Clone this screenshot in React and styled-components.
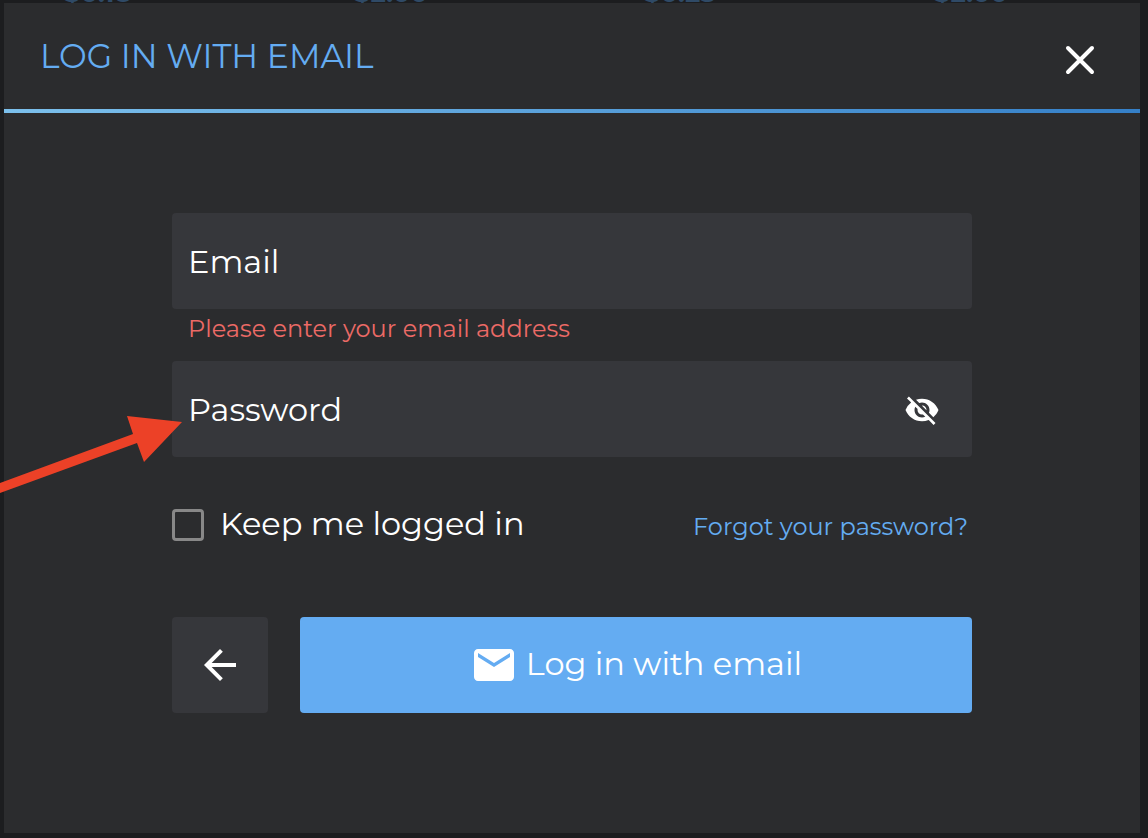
import React, { useState } from "react";
import styled, { createGlobalStyle } from "styled-components";
import { MdArrowBack, MdEmail, MdVisibility, MdVisibilityOff } from "react-icons/md";

const GlobalStyle = createGlobalStyle`
  *, *::before, *::after { box-sizing: border-box; }
  body {
    margin: 0;
    background: #1c1d1f;
    color: #fff;
    font-family: Montserrat, Inter, "Liberation Sans", sans-serif;
  }
  button, input { font: inherit; color: inherit; }
`;

const Backdrop = styled.div`
  position: relative;
  display: flex;
  min-height: 100vh;
  padding: 3px 8px 5px 4px;
  overflow: hidden;
`;

const PriceStrip = styled.div`
  position: absolute;
  top: -27px;
  left: 64px;
  display: grid;
  grid-template-columns: repeat(4, 290px);
  color: #2f4a66;
  font-size: 26px;
  font-weight: 700;
  line-height: 40px;
`;

const Dialog = styled.section`
  position: relative;
  flex: 1;
  min-width: 0;
  background: #2b2c2e;
`;

const Header = styled.header`
  display: flex;
  align-items: center;
  justify-content: space-between;
  height: 106px;
  padding: 0 36px;
`;

const Title = styled.h1`
  margin: 0;
  color: #64acf2;
  font-size: 33px;
  font-weight: 400;
  line-height: 40px;
`;

const CloseButton = styled.button`
  display: flex;
  padding: 8px;
  border: 0;
  background: none;
  cursor: pointer;
`;

const Accent = styled.div`
  height: 4px;
  background: linear-gradient(90deg, #7cc0ec, #3580c8);
`;

const Form = styled.form`
  width: 100%;
  max-width: 800px;
  margin: 0 auto;
  padding: 100px 0 120px;
`;

const Field = styled.div`
  display: flex;
  align-items: center;
  height: 96px;
  padding-right: 32px;
  border-radius: 4px;
  background: #36373b;
`;

const TextInput = styled.input`
  flex: 1;
  min-width: 0;
  height: 96px;
  padding: 0 16px;
  border: 0;
  outline: 0;
  background: none;
  font-size: 32px;
  &::placeholder { color: #fff; opacity: 1; }
`;

const IconButton = styled.button`
  display: flex;
  padding: 2px 0 0;
  border: 0;
  background: none;
  font-size: 36px;
  cursor: pointer;
`;

const ErrorText = styled.p`
  height: 52px;
  margin: 0;
  padding: 0 16px;
  color: #ec6a66;
  font-size: 24px;
  line-height: 40px;
`;

const Options = styled.div`
  display: flex;
  align-items: center;
  justify-content: space-between;
  height: 32px;
  margin: 52px 0 76px;
  padding-right: 4px;
`;

const CheckLabel = styled.label`
  display: flex;
  align-items: center;
  gap: 16px;
  font-size: 32px;
  line-height: 32px;
  span { padding-bottom: 2px; }
`;

const Checkbox = styled.input`
  width: 32px;
  height: 32px;
  margin: 0;
  appearance: none;
  border: 3px solid #888;
  border-radius: 4px;
  &:checked { background: #64acf2; }
`;

const ForgotLink = styled.a`
  padding-top: 4px;
  color: #64acf2;
  font-size: 24px;
  line-height: 32px;
  text-decoration: none;
`;

const Actions = styled.div`
  display: flex;
  gap: 32px;
`;

const ActionButton = styled.button`
  display: flex;
  flex: ${(p) => (p.$primary ? "1" : "0 0 96px")};
  align-items: center;
  justify-content: center;
  gap: 8px;
  height: 96px;
  padding: 0;
  border: 0;
  border-radius: 4px;
  background: ${(p) => (p.$primary ? "#64acf2" : "#36373b")};
  font-size: 32px;
  cursor: pointer;
  svg { font-size: 48px; }
  span { padding-bottom: 4px; }
`;

const Pointer = styled.svg`
  position: absolute;
  top: 410px;
  left: 0;
  pointer-events: none;
`;

const prices = ["$0.18", "$2.00", "$0.25", "$2.00"];

export default function App() {
  const [shown, setShown] = useState(false);
  return (
    <>
      <GlobalStyle />
      <Backdrop>
        <PriceStrip aria-hidden="true">
          {prices.map((price, i) => (
            <span key={i}>{price}</span>
          ))}
        </PriceStrip>
        <Dialog role="dialog" aria-labelledby="title">
          <Header>
            <Title id="title">LOG IN WITH EMAIL</Title>
            <CloseButton type="button" aria-label="Close">
              <svg width="32" height="40" viewBox="0 -8 32 40" fill="none" stroke="#fff" strokeWidth="4" strokeLinecap="round">
                <path d="M4 4 28 28M28 4 4 28" />
              </svg>
            </CloseButton>
          </Header>
          <Accent />
          <Form onSubmit={(e) => e.preventDefault()}>
            <Field>
              <TextInput type="email" aria-label="Email" placeholder="Email" aria-describedby="email-error" />
            </Field>
            <ErrorText id="email-error">Please enter your email address</ErrorText>
            <Field>
              <TextInput type={shown ? "text" : "password"} aria-label="Password" placeholder="Password" />
              <IconButton type="button" aria-label="Show password" onClick={() => setShown(!shown)}>
                {shown ? <MdVisibility /> : <MdVisibilityOff />}
              </IconButton>
            </Field>
            <Options>
              <CheckLabel>
                <Checkbox type="checkbox" />
                <span>Keep me logged in</span>
              </CheckLabel>
              <ForgotLink href="#forgot">Forgot your password?</ForgotLink>
            </Options>
            <Actions>
              <ActionButton type="button" aria-label="Back">
                <MdArrowBack />
              </ActionButton>
              <ActionButton type="submit" $primary>
                <MdEmail />
                <span>Log in with email</span>
              </ActionButton>
            </Actions>
          </Form>
        </Dialog>
        <Pointer width="190" height="90" viewBox="0 410 190 90" aria-hidden="true">
          <path d="M0 483 133 434 127 416 182 422 144 462 137 443 0 493Z" fill="#ec4127" />
        </Pointer>
      </Backdrop>
    </>
  );
}
